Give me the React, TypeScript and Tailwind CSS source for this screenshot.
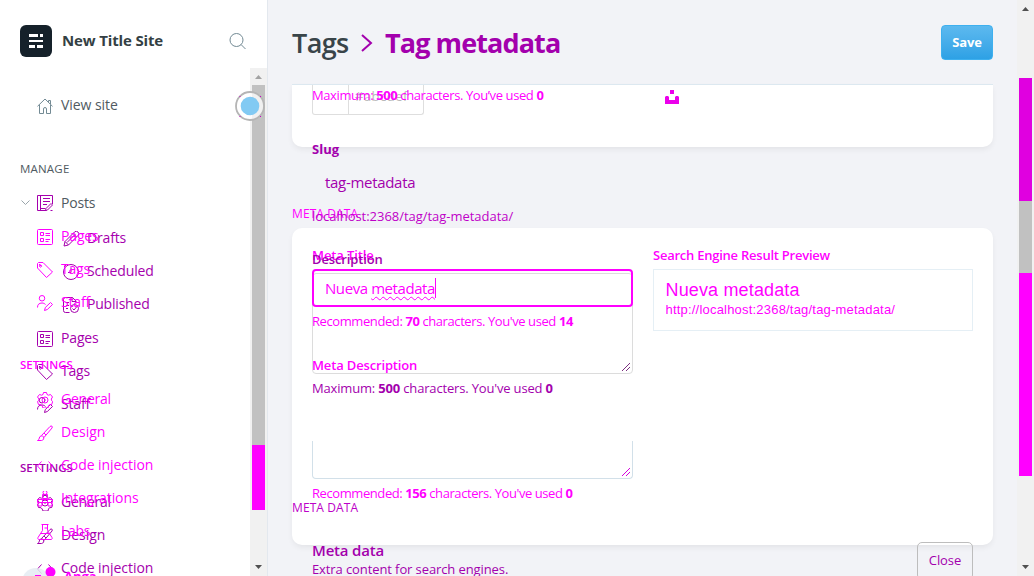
import React from "react";

type IconName = "home" | "posts" | "pages" | "tags" | "staff" | "gear" | "brush" | "code" | "blocks" | "flask" | "pencil" | "clock" | "published";

const icons: Record<IconName, React.ReactNode> = {
  home: <path d="M.5 8.3 8 1l7.500 7.300M2.500 7v8.500h4V11a1.500 1.500 0 0 1 3 0v4.500h4V7M11.500 4V2.500h2V6" />,
  posts: <path d="M15.500 9V.5H.5v15h9M3.500.5v15M6 3.500h7M6 6.500h7M6 9.500h4M9 13.500l5-5 1.500 1.500-5 5-2 .5zM3.500 13.500h5M13.500 15.500h2" />,
  pages: <path d="M1.500.5h13a1 1 0 0 1 1 1v13a1 1 0 0 1-1 1h-13a1 1 0 0 1-1-1v-13a1 1 0 0 1 1-1zM3.500 3.500h3v3h-3zM3.500 9.500h3v3h-3zM8.500 4.500h4.500M8.500 6.500h4.500M8.500 10.500h4.500M8.500 12.500h3" />,
  tags: <path d="M.5 1.500v4.500l9 9.500 6-5.500L6 .5H1.500zM4.500 3.500a1 1 0 1 1-2 1 1 1 0 0 1 2-1zM2 2l2 2" />,
  staff: <path d="M5 .5a2.700 2.700 0 1 1 0 5.500 2.700 2.700 0 0 1 0-5.500zM.5 12.500C.5 9.500 2 8 5 8c1.500 0 2.500.5 3.500 1.500M7.500 15.500l.8-3 5.200-5 2 2-5.200 5z" />,
  gear: <path d="M6.500.5h3l.5 2 1.500.7 2-.7 2 2.500-1.200 2 .2 1.500 1.200 1-1 3-2.200.2-1 1.300-.5 2H6l-.8-2-1.200-1.300-2.500-.2-1-3 1.300-1L2 7 .5 5l2-2.500 2 .7L6 2.500zM8 5a3 3 0 1 1 0 6 3 3 0 0 1 0-6zM8 7v2" />,
  brush: <path d="M.5 15.500h4c2-.3 2.800-2 2-3.800-1.500-1.500-3.800-1-4.200 1.300-.2 1.500-.8 2-1.800 2.500zM4.500 10.500 13 1.500c1.500-1.300 3 0 2 1.500l-8 9.500M7 8l2 2" />,
  code: <path d="M4.500 3.500.5 8l4 4.500M11.500 3.500l4 4.500-4 4.500" />,
  blocks: <path d="M6 1.500a2 2 0 1 1 4 0 2 2 0 0 1-4 0zM5.500 3.500h5v4h-5zM.5 8.500h5v3h-5zM10.500 8.500h5v3h-5zM5.500 8.500h5v3h-5zM1 12v3h4v-3M11 12v3h4v-3" />,
  flask: <path d="M4.500.5h7M5.500.5v6L1 13.500c-.5 1 0 2 1 2h12c1 0 1.500-1 1-2L10.500 6.500v-6M4 9.500h8M7.500 4h3" />,
  pencil: <path d="m1 15 1-4.500L11.500 1a2 2 0 0 1 3.500 3.500L5.500 14zM2 10.500 5.500 14M4 11.500l8-8M10 2.500 13.500 6" />,
  clock: <path d="M8 .5a7.500 7.500 0 1 1 0 15 7.500 7.500 0 0 1 0-15zM8 3.500v5H5M1 3l2-2" />,
  published: <path d="M6.500 15.500h-4a2 2 0 0 1-2-2v-11a2 2 0 0 1 2-2h7l3.500 3.500v2M9 .5v4h4M3 5.500h3M3 8.500h3M3 11.500h2M11.500 7.500a4 4 0 1 1 0 8 4 4 0 0 1 0-8zM9.500 11.500l1.500 1.500 2.500-3" />,
};

function Icon({ name, className = "" }: { name: IconName; className?: string }) {
  return (
    <svg viewBox="0 0 16 16" className={`size-4 shrink-0 ${className}`} fill="none" stroke="currentColor" strokeWidth="1">
      {icons[name]}
    </svg>
  );
}

function NavItem({ icon, label, className = "", iconClass = "" }: { icon: IconName; label: string; className?: string; iconClass?: string }) {
  return (
    <li className={`flex h-[33px] shrink-0 items-center gap-2 pl-[37px] ${className}`}>
      <Icon name={icon} className={iconClass} />
      <span className="pb-[2px]">{label}</span>
    </li>
  );
}

function SubItem({ icon, label, className = "" }: { icon: IconName; label: string; className?: string }) {
  return (
    <li className={`flex h-[33px] shrink-0 items-center gap-2 pl-[63px] ${className}`}>
      <Icon name={icon} />
      <span className="pb-[2px]">{label}</span>
    </li>
  );
}

function Grip({ className }: { className: string }) {
  return (
    <svg viewBox="0 0 10 10" className={`size-[10px] ${className}`} fill="none" stroke="currentColor">
      <path d="M1 9 9 1M5 9l4-4" />
    </svg>
  );
}

function Arrow({ up = false, className }: { up?: boolean; className: string }) {
  return (
    <svg viewBox="0 0 17 17" className={`size-[17px] shrink-0 ${className}`} fill="currentColor">
      <path d={up ? "M5 11h7L8.500 7z" : "M5 6h7l-3.500 4z"} />
    </svg>
  );
}

function Sidebar() {
  return (
    <aside className="relative flex h-full w-[268px] shrink-0 flex-col border-r border-[#e3e8ee] bg-white text-[14px] text-[#505a61]">
      <header className="flex h-[68px] shrink-0 items-center pt-[14px] pr-[21px] pl-5">
        <svg viewBox="0 0 32 32" className="size-8">
          <rect width="32" height="32" rx="6" fill="#15212a" />
          <path fill="#fff" d="M9 9h9v3H9zM20 9h3v3h-3zM9 15h14v2H9zM9 20h6v3H9zM17 20h6v3h-6z" />
        </svg>
        <h2 className="ml-[10px] pb-[2px] text-[15px] font-bold tracking-[-0.15px] text-[#343f44]">New Title Site</h2>
        <svg viewBox="0 0 17 17" className="ml-auto size-[17px]" fill="none" stroke="#738a94">
          <circle cx="7.500" cy="7" r="6.500" />
          <path d="m12 11.500 4.500 4.500" />
        </svg>
      </header>
      <div className="flex min-h-0 grow">
        <nav className="min-w-0 grow overflow-hidden">
          <ul className="flex flex-col text-[#a500ad]">
            <NavItem icon="home" label="View site" className="mt-[21px] tracking-[-0.05px] text-[#505a61]" iconClass="text-[#738a94]" />
            <li className="mt-[37px] h-5 pl-5 text-[11.5px] leading-5 font-medium tracking-[0.2px] text-[#505a61]">MANAGE</li>
            <li className="mt-[7px] flex h-[33px] items-center gap-2 pl-[21px] tracking-[-0.2px]">
              <svg viewBox="0 0 9 5" className="-mr-px h-[5px] w-[9px]" fill="none" stroke="#9aa5ab"><path d="m.5.5 4 4 4-4" /></svg>
              <Icon name="posts" />
              <span className="pb-px text-[#505a61]">Posts</span>
            </li>
            <SubItem icon="pencil" label="Drafts" className="mt-[3px] tracking-[-0.17px]" />
            <SubItem icon="clock" label="Scheduled" className="tracking-[-0.14px]" />
            <SubItem icon="published" label="Published" className="tracking-[-0.2px]" />
            <NavItem icon="pages" label="Pages" className="mt-px tracking-[-0.15px]" />
            <NavItem icon="tags" label="Tags" className="tracking-[-0.19px]" />
            <NavItem icon="staff" label="Staff" className="tracking-[-0.17px]" />
            <li className="mt-[37px] h-5 pl-5 text-[11.5px] leading-5 font-semibold">SETTINGS</li>
            <NavItem icon="gear" label="General" className="mt-[8px] tracking-[-0.25px]" />
            <NavItem icon="brush" label="Design" />
            <NavItem icon="code" label="Code injection" className="tracking-[-0.05px]" />
          </ul>
        </nav>
        <div className="flex w-[17px] shrink-0 flex-col bg-[#f1f1f1]">
          <Arrow up className="text-[#a3a3a3]" />
          <div className="mx-[2px] h-[360px] bg-[#c1c1c1]" />
          <div className="mx-[2px] h-[65px] bg-[#ff00ff]" />
          <Arrow className="mt-auto text-[#505050]" />
        </div>
      </div>

      <ul className="pointer-events-none absolute top-[220px] left-0 flex w-[250px] flex-col text-[#ff00ff]">
        <NavItem icon="pages" label="Pages" className="tracking-[-0.15px]" />
        <NavItem icon="tags" label="Tags" className="tracking-[-0.19px]" />
        <NavItem icon="staff" label="Staff" className="tracking-[-0.17px]" />
        <li className="mt-9 h-5 pl-5 text-[11.5px] leading-5 font-semibold">SETTINGS</li>
        <NavItem icon="gear" label="General" className="mt-[8px] tracking-[-0.25px]" />
        <NavItem icon="brush" label="Design" />
        <NavItem icon="code" label="Code injection" className="tracking-[-0.05px]" />
        <NavItem icon="blocks" label="Integrations" className="tracking-[-0.1px]" />
        <NavItem icon="flask" label="Labs" className="tracking-[-0.3px]" />
      </ul>
      <div className="absolute top-[567px] left-[22px] flex h-[9px] w-[100px] overflow-hidden">
        <svg viewBox="0 0 36 9" className="h-[9px] w-9 shrink-0" fill="none">
          <circle cx="14" cy="15" r="14" fill="#e4ebf2" fillOpacity=".85" />
          <circle cx="28.500" cy="5" r="5" fill="#ff00ff" />
          <path d="M13 8.500h6" stroke="#ff00ff" />
        </svg>
        <span className="ml-[6px] text-[13px] leading-[19px] font-bold text-[#ff00ff]">Anga</span>
      </div>
      <svg viewBox="0 0 30 30" className="absolute top-[91px] left-[235px] size-[30px]">
        <circle cx="15" cy="15" r="14" fill="#fff" fillOpacity=".75" stroke="#b5b5b5" strokeWidth="1.800" />
        <circle cx="15" cy="15" r="9.300" fill="#82caf3" />
        <path d="M4.500 5.500h1M25 5.500h1M4.500 25.500h1M25 25.500h1" stroke="#c800c8" />
      </svg>
    </aside>
  );
}

function PreviousForm() {
  return (
    <div className="pointer-events-none absolute inset-x-6 top-[85px] bottom-0 overflow-hidden text-[13px] leading-5 text-[#a300ad]">
      <div className="flex flex-col pl-5">
        <p className="h-5 tracking-[-0.4px] whitespace-nowrap text-[#ff00ff]">
          Maximum: <b>500</b> characters. You’ve used <b>0</b>
        </p>
        <p className="mt-[34px] h-5 font-bold">Slug</p>
        <p className="mt-[13px] h-5 pl-[13px] text-[15px] tracking-[-0.3px]">tag-metadata</p>
        <p className="mt-[14px] h-5 tracking-[-0.03px] text-[#bf00c8]">localhost:2368/tag/tag-metadata/</p>
        <p className="mt-[23px] h-5 font-semibold tracking-[-0.13px]">Description</p>
        <div className="mt-1 flex h-[101px] w-[321px] items-end justify-end rounded-[4px] border border-[#dcdcdc] p-px">
          <Grip className="text-[#7c2f80]" />
        </div>
        <p className="mt-[4px] h-5 tracking-[-0.17px]">
          Maximum: <b>500</b> characters. You've used <b>0</b>
        </p>
      </div>
      <p className="mt-[100px] h-5 text-[12px] font-medium tracking-[0.1px] text-[#bd00c8]">META DATA</p>
      <div className="mt-[22px] flex h-[42px] w-[681px] items-start justify-between pl-5">
        <div className="pt-px">
          <p className="h-[18px] text-[15px] leading-[18px] font-semibold tracking-[-0.19px]">Meta data</p>
          <p className="h-5 tracking-[-0.1px]">Extra content for search engines.</p>
        </div>
        <div className="mt-[2px] flex h-[38px] w-[56px] items-center justify-center rounded-[5px] border border-[#bdbdbd] pb-[2px] text-[13px] tracking-[-0.1px]">
          Close
        </div>
      </div>
    </div>
  );
}

export default function App() {
  return (
    <div className="flex h-[576px] w-[1034px] overflow-hidden bg-[#f2f3f7] font-['Open_Sans','Noto_Sans',sans-serif]">
      <Sidebar />
      <main className="relative flex min-w-0 grow flex-col overflow-hidden px-6">
        <header className="flex h-[84px] shrink-0 items-center justify-between">
          <h1 className="flex items-center pt-px text-[27px] leading-9 font-bold tracking-[-0.9px] text-[#a300ad]">
            <span className="w-[57px] font-semibold tracking-[-0.6px] text-[#394449]">Tags</span>
            <svg viewBox="0 0 12 18" className="mx-3 h-[18px] w-3" fill="none" stroke="currentColor" strokeWidth="2"><path d="m1 1 9 8-9 8" /></svg>
            Tag metadata
          </h1>
          <button className="mt-px h-[35px] w-[52px] rounded-[4px] border border-[#3eb0ef] bg-linear-to-b from-[#5cb9ef] to-[#2da1e5] text-[13px] font-bold tracking-[-0.2px] text-white">Save</button>
        </header>
        <section className="h-[63px] w-[701px] shrink-0 rounded-b-[10px] border-t border-[#dce8f0] bg-white pl-5 shadow-[0_3px_6px_-1px_rgba(0,0,0,0.07)]">
          <div className="flex h-[30px] w-[112px] rounded-b-[3px] border border-t-0 border-[#dedede] text-[13px] text-[#b9b9b9]">
            <div className="w-9 border-r border-[#dedede]" />
            <span className="pl-[6px] leading-[23px] tracking-[0.5px]">#abcdef</span>
          </div>
        </section>
        <h3 className="mt-[57px] h-5 shrink-0 text-[12px] leading-5 tracking-[0.1px] text-[#ff00ff]">META DATA</h3>
        <section className="mt-[4px] grid h-[317px] w-[701px] shrink-0 grid-cols-[321px_320px] gap-5 rounded-[10px] bg-white px-5 pt-[17px] text-[13px] leading-5 text-[#ff00ff] shadow-[0_3px_6px_-1px_rgba(0,0,0,0.07)]">
          <div className="flex flex-col">
            <p className="h-5 font-semibold tracking-[-0.1px]">Meta Title</p>
            <div className="relative z-10 mt-1 flex h-[38px] items-center rounded-[4px] border-2 border-[#ff00ff] pl-[11px] text-[15px] tracking-[-0.42px]">
              <span className="whitespace-pre">Nueva </span>
              <span className="underline decoration-wavy decoration-1 underline-offset-2">metadata</span>
              <span className="h-5 w-px bg-[#ff00ff]" />
            </div>
            <p className="mt-1 h-5 tracking-[-0.41px] whitespace-nowrap">
              Recommended: <b>70</b> characters. You've used <b>14</b>
            </p>
            <p className="mt-6 h-5 font-semibold tracking-[-0.15px]">Meta Description</p>
            <div className="mt-[66px] flex h-[38px] items-end justify-end rounded-b-[4px] border border-t-0 border-[#d2e0e9] p-px">
              <Grip className="text-[#d500dd]" />
            </div>
            <p className="mt-1 h-5 tracking-[-0.42px] whitespace-nowrap">
              Recommended: <b>156</b> characters. You've used <b>0</b>
            </p>
          </div>
          <div className="flex flex-col">
            <p className="h-5 font-semibold tracking-[-0.24px]">Search Engine Result Preview</p>
            <div className="mt-1 h-[62px] border border-[#e5eff5] px-[11.5px] pt-[9px] font-['Liberation_Sans',Arial,sans-serif]">
              <p className="text-[18px] leading-[22px] tracking-[0.15px]">Nueva metadata</p>
              <p className="text-[13px] leading-[18px] tracking-[0.2px]">http://localhost:2368/tag/tag-metadata/</p>
            </div>
          </div>
        </section>
        <PreviousForm />
        <svg viewBox="0 0 14 14" className="absolute top-[90px] left-[397px] size-[14px]" fill="#eb00eb">
          <path d="M5 0h4v4H5zM0 7l1-1h2l1 1v3h6V7l1-1h2l1 1v7H0z" />
        </svg>
      </main>
      <div className="flex w-[17px] shrink-0 flex-col bg-[#f1f1f1]">
        <Arrow up className="text-[#505050]" />
        <div className="mx-[2px] mt-[61px] h-[123px] bg-[#e000e0]" />
        <div className="mx-[2px] h-[72px] bg-[#c1c1c1]" />
        <div className="mx-[2px] h-[203px] bg-[#ff00ff]" />
        <Arrow className="mt-auto text-[#505050]" />
      </div>
    </div>
  );
}
